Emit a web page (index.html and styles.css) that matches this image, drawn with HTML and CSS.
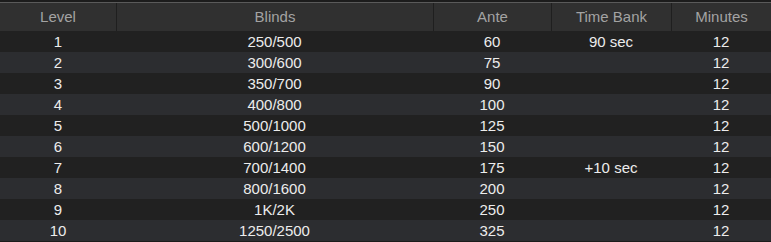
FILE: index.html
```html
<!DOCTYPE html>
<html>
<head>
<meta charset="utf-8">
<link rel="stylesheet" href="styles.css">
</head>
<body>
<div class="table">
  <div class="row head">
    <div class="c">Level</div><div class="c">Blinds</div><div class="c">Ante</div><div class="c">Time Bank</div><div class="c">Minutes</div>
  </div>
  <div class="row odd"><div class="c">1</div><div class="c">250/500</div><div class="c">60</div><div class="c">90 sec</div><div class="c">12</div></div>
  <div class="row even"><div class="c">2</div><div class="c">300/600</div><div class="c">75</div><div class="c"></div><div class="c">12</div></div>
  <div class="row odd"><div class="c">3</div><div class="c">350/700</div><div class="c">90</div><div class="c"></div><div class="c">12</div></div>
  <div class="row even"><div class="c">4</div><div class="c">400/800</div><div class="c">100</div><div class="c"></div><div class="c">12</div></div>
  <div class="row odd"><div class="c">5</div><div class="c">500/1000</div><div class="c">125</div><div class="c"></div><div class="c">12</div></div>
  <div class="row even"><div class="c">6</div><div class="c">600/1200</div><div class="c">150</div><div class="c"></div><div class="c">12</div></div>
  <div class="row odd"><div class="c">7</div><div class="c">700/1400</div><div class="c">175</div><div class="c">+10 sec</div><div class="c">12</div></div>
  <div class="row even"><div class="c">8</div><div class="c">800/1600</div><div class="c">200</div><div class="c"></div><div class="c">12</div></div>
  <div class="row odd"><div class="c">9</div><div class="c">1K/2K</div><div class="c">250</div><div class="c"></div><div class="c">12</div></div>
  <div class="row even"><div class="c">10</div><div class="c">1250/2500</div><div class="c">325</div><div class="c"></div><div class="c">12</div></div>
</div>
</body>
</html>
```
FILE: styles.css
```css
html, body {
  margin: 0;
  padding: 0;
  background: #1c1c1c;
}
.table {
  width: 771px;
  padding-top: 2px;
  font-family: "Liberation Sans", Arial, sans-serif;
  font-size: 15px;
}
.row {
  display: grid;
  grid-template-columns: 116px 317px 118px 120px 100px;
  height: 21px;
  align-items: center;
  color: #ececec;
}
.c {
  text-align: center;
  line-height: 21px;
  white-space: nowrap;
}
.head {
  height: 28px;
  background: #303030;
  border-top: 1px solid #5a5a5a;
  color: #a3a3a3;
  align-items: stretch;
}
.head .c {
  line-height: 28px;
}
.head .c + .c {
  border-left: 1px solid #1f1f1f;
}
.odd {
  background: #212121;
}
.even {
  background: #2c2d30;
}
```
